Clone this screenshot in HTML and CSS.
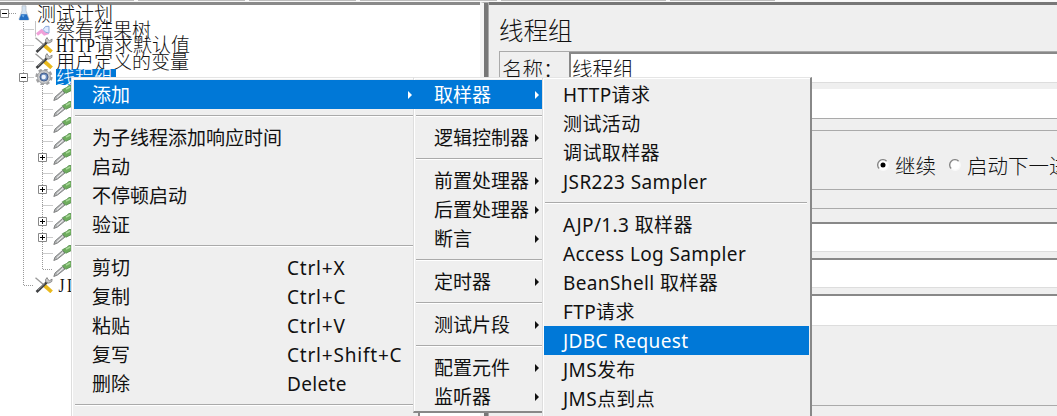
FILE: index.html
```html
<!DOCTYPE html>
<html lang="zh-CN">
<head>
<meta charset="utf-8">
<title>线程组</title>
<link rel="stylesheet" href="styles.css">
</head>
<body>
<svg class="defs" width="0" height="0">
  <defs>
    <symbol id="tools" viewBox="0 0 18 16">
      <path d="M.5.8 9 8" stroke="#999" stroke-width="1.3"/><path d="M9.5 8.5 16.6 14.8" stroke="#e9b91d" stroke-width="3.8"/>
      <path d="M1.5 15 12.5 4.6" stroke="#3e4042" stroke-width="2.6"/><path d="M3 13 10 6.3" stroke="#aaa" stroke-width=".7"/>
      <path d="M12 .6q-2.4 2-1.2 4.5 3 2.4 6-.6l.3-2.4-2.7 1.6-1.4-1.2z" fill="#ccc" stroke="#777" stroke-width=".8"/>
    </symbol>
    <symbol id="dropper" viewBox="0 0 18 16">
      <path d="M.8 15.5 2 12 9.5 5.5 12 8 4.5 14z" fill="#b4b6b7" stroke="#6a6c6c" stroke-width=".8"/>
      <path d="M4 12.6 10 7.4" stroke="#f4f4f4" stroke-width="1"/>
      <path d="M9.4 4.7 12.8 8.3 15 7.2 18.5 5.5v-5H16L13.5 2.6z" fill="#6fae5e" stroke="#528a4a" stroke-width=".8"/>
      <path d="m13 4.2 4-2.2" stroke="#a9d899" stroke-width="1.5"/>
    </symbol>
    <symbol id="flask" viewBox="0 0 12 16">
      <path d="M4 .8h4v5l3 8.2q0 1-1 1H2q-1 0-1-1l3-8.2z" fill="#d2e2f1" stroke="#b2b9c1" stroke-width=".7"/>
      <path d="M3.2 9.2h5.6l2 5q0 .8-1 .8H2q-1 0-.8-.8z" fill="#246fc3"/><path d="M3.5 10.3h3l-1.2 2.2z" fill="#78b5ed"/>
    </symbol>
    <symbol id="chart" viewBox="0 0 18 16">
      <path d="M.5 0v15.5" stroke="#c5c5c5"/><path d="m2 13.5 4.5-3.5 3 3 4-1.5" fill="none" stroke="#f0a0d8" stroke-width="3.2"/>
      <path d="M8 8.5q2-4.5 6-3.2v6.8q-4 0-6-3.6z" fill="#dfeaff" stroke="#8daada"/>
    </symbol>
    <symbol id="gear" viewBox="0 0 18 16">
      <circle cx="9" cy="8" r="7.4" fill="none" stroke="#a0a0a2" stroke-width="2.4" stroke-dasharray="3.4 2.4"/>
      <circle cx="9" cy="8" r="6.6" fill="#c5c6c8" stroke="#98999b" stroke-width=".7"/>
      <circle cx="9" cy="8" r="4" fill="#6d8fc2" stroke="#465f8c"/><circle cx="8.7" cy="8" r="2.2" fill="#eef3fa"/>
    </symbol>
    <symbol id="radio" viewBox="0 0 12 12">
      <circle cx="6" cy="6" r="5" fill="#fff"/><path d="M2.2 9.6A5 5 0 0 1 9.6 2.2" fill="none" stroke="#888" stroke-width="1.4"/><path d="M9.8 2.6A5 5 0 0 1 2.6 9.8" fill="none" stroke="#fafafa" stroke-width="1.2"/>
    </symbol>
  </defs>
</svg>
<div class="app">
  <div class="toolbar"><i class="t1"></i><i class="t2"></i><i class="t3"></i><i class="t4"></i><i class="t5"></i><i class="t6"></i></div>
  <div class="split">
    <div class="tree">
      <svg class="lines" width="72" height="300" fill="none" stroke="#999" stroke-dasharray="1 1">
        <path d="M9 8.5H16M23.5 17V280.5H34M23.5 24.5H34M23.5 40.5H34M23.5 56.5H34M23.5 72.5H34"/>
        <path d="M42.5 81V264.5H53M42.5 88.5H53M42.5 104.5H53M42.5 120.5H53M42.5 136.5H53M42.5 152.5H53M42.5 168.5H53M42.5 184.5H53M42.5 200.5H53M42.5 216.5H53M42.5 232.5H53M42.5 248.5H53"/>
        <g fill="#fff" stroke="#888" stroke-dasharray="none"><path d="M.5 4.5h8v8h-8zM19.5 68.5h8v8h-8zM38.5 148.5h8v8h-8zM38.5 180.5h8v8h-8zM38.5 212.5h8v8h-8zM38.5 228.5h8v8h-8z"/></g>
        <path stroke="#000" stroke-dasharray="none" d="M2 8.5h5M21 72.5h5M40 152.5h5M42.5 150v5M40 184.5h5M42.5 182v5M40 216.5h5M42.5 214v5M40 232.5h5M42.5 230v5"/>
      </svg>
      <div class="node root"><svg class="flask"><use href="#flask"/></svg><span>测试计划</span></div>
      <div class="node l1"><svg><use href="#chart"/></svg><span>察看结果树</span></div>
      <div class="node l1"><svg><use href="#tools"/></svg><span><b class="latin">HTTP</b>请求默认值</span></div>
      <div class="node l1"><svg><use href="#tools"/></svg><span>用户定义的变量</span></div>
      <div class="node l1"><svg><use href="#gear"/></svg><span class="selected">线程组</span></div>
      <div class="node l2"><svg><use href="#dropper"/></svg></div><div class="node l2"><svg><use href="#dropper"/></svg></div>
      <div class="node l2"><svg><use href="#dropper"/></svg></div><div class="node l2"><svg><use href="#dropper"/></svg></div>
      <div class="node l2"><svg><use href="#dropper"/></svg></div><div class="node l2"><svg><use href="#dropper"/></svg></div>
      <div class="node l2"><svg><use href="#dropper"/></svg></div><div class="node l2"><svg><use href="#dropper"/></svg></div>
      <div class="node l2"><svg><use href="#dropper"/></svg></div><div class="node l2"><svg><use href="#dropper"/></svg></div>
      <div class="node l2"><svg><use href="#dropper"/></svg></div><div class="node l2"><svg><use href="#dropper"/></svg></div>
      <div class="node l1"><svg><use href="#tools"/></svg><span><b class="latin jd">JD</b></span></div>
    </div>
    <div class="divider"></div>
    <div class="panel">
      <h1>线程组</h1>
      <div class="name"><label>名称：</label><div class="input">线程组</div></div>
      <div class="comment"></div>
      <div class="action">
        <svg class="radio"><use href="#radio"/><circle cx="6" cy="6" r="2.5"/></svg><span class="continue">继续</span>
        <svg class="radio"><use href="#radio"/></svg><span>启动下一进程</span>
      </div>
      <div class="props"><div class="field"></div><div class="field"></div><div class="field last"></div></div>
    </div>
  </div>
</div>
<div class="menu main">
  <div class="item active sub">添加</div><hr>
  <div class="item">为子线程添加响应时间</div><div class="item">启动</div><div class="item">不停顿启动</div><div class="item">验证</div><hr>
  <div class="item">剪切<kbd>Ctrl+X</kbd></div><div class="item">复制<kbd>Ctrl+C</kbd></div><div class="item">粘贴<kbd>Ctrl+V</kbd></div><div class="item">复写<kbd>Ctrl+Shift+C</kbd></div><div class="item">删除<kbd class="word">Delete</kbd></div><hr>
</div>
<div class="menu add">
  <div class="item active sub">取样器</div><hr><div class="item sub">逻辑控制器</div><hr>
  <div class="item sub">前置处理器</div><div class="item sub">后置处理器</div><div class="item sub">断言</div><hr>
  <div class="item sub">定时器</div><hr><div class="item sub">测试片段</div><hr>
  <div class="item sub">配置元件</div><div class="item sub">监听器</div>
</div>
<div class="menu sampler">
  <div class="item">HTTP请求</div><div class="item">测试活动</div><div class="item">调试取样器</div><div class="item">JSR223 Sampler</div><hr>
  <div class="item">AJP/1.3 取样器</div><div class="item">Access Log Sampler</div><div class="item">BeanShell 取样器</div><div class="item">FTP请求</div><div class="item active">JDBC Request</div><div class="item">JMS发布</div><div class="item">JMS点到点</div>
</div>
</body>
</html>
```
FILE: styles.css
```css
* { box-sizing: border-box; }
body { margin: 0; width: 1057px; height: 416px; overflow: hidden; position: relative; background: #efefef; color: #111; font-family: "Noto Sans", "Noto Sans CJK SC", sans-serif; }
.defs { position: absolute; }
.app { height: 416px; overflow: hidden; }
.toolbar { height: 2px; display: flex; gap: 4px; background: #f8f8f8; }
.toolbar i { background: #bdbdbd; height: 1px; }
.t1 { width: 134px; } .t2 { width: 107px; } .t3 { width: 107px; } .t4 { width: 137px; } .t5 { width: 165px; } .t6 { width: 105px; }
.split { display: flex; height: 414px; }
.tree { width: 480px; background: #fff; border-top: 3px solid #8a8a8a; position: relative; font: 300 19px/16px "Noto Sans CJK SC", sans-serif; color: #111; }
.lines { position: absolute; left: 0; top: 0; }
.node { height: 16px; display: flex; align-items: center; white-space: nowrap; position: relative; }
.node svg { width: 18px; height: 16px; flex: none; }
.node svg.flask { width: 12px; margin-right: 7px; }
.root { padding-left: 18px; }
.l1 { padding-left: 35px; gap: 3px; }
.l2 { padding-left: 53px; }
.selected { background: #0078d7; color: #fff; height: 16px; padding-right: 3px; }
.latin { display: inline-block; width: 39px; font: 19px/16px "Liberation Serif", serif; transform: scaleX(.82); transform-origin: left; }
.jd { padding-left: 3px; letter-spacing: 3px; }
.divider { width: 9px; border-left: 4px solid #f5f5f5; border-right: 1px solid #aaa; background: #777; border-top: 1px solid #aaa; }
.panel { width: 568px; border-top: 3px solid #777; padding-left: 10px; font-family: "Noto Sans CJK SC", sans-serif; font-weight: 300; color: #111; }
h1 { margin: 0; height: 46px; font-size: 24.5px; font-weight: 300; line-height: 50px; }
.name { height: 32px; display: flex; border: 1px solid #aaa; border-right: 0; border-bottom: 0; font-size: 20.5px; line-height: 32px; }
.name label { width: 69px; padding-left: 2px; }
.input { flex: 1; border: 2px solid #888; border-right: 0; border-bottom: 1px solid #ddd; background: #fff; padding-left: 1px; line-height: 29px; }
.comment { height: 30px; margin-top: 6px; background: #fff; border-bottom: 1px solid #aaa; }
.action { height: 60px; margin-top: 11px; border-top: 1px solid #aaa; border-bottom: 1px solid #aaa; display: flex; align-items: center; padding: 10px 0 0 378px; font-size: 20.5px; white-space: nowrap; }
.radio { width: 12px; height: 12px; flex: none; margin-right: 6px; }
.continue { margin-right: 13px; }
.props { height: 198px; margin-top: 18px; border-top: 1px solid #aaa; border-bottom: 1px solid #aaa; padding-top: 13px; }
.field { height: 30px; margin-bottom: 6px; background: #fff; border-top: 2px solid #888; border-bottom: 1px solid #ddd; }
.field.last { height: 32px; }
.menu { position: absolute; top: 77px; background: #efefef; border-top: 1px solid #e5e5e5; border-left: 1px solid #dedede; padding-top: 2px; font-size: 19px; box-shadow: inset 1px 1px #fff; }
.main { left: 71px; width: 349px; height: 340px; padding: 2px 3px 0 2px; border-right: 2px solid #888; }
.add { left: 413px; width: 131px; height: 336px; padding-left: 1px; border-bottom: 2px solid #888; }
.add .active { margin-left: -2px; padding-left: 21px; }
.sampler { left: 542px; width: 270px; height: 340px; padding: 2px 1px 0; border-right: 2px solid #888; }
.item { height: 29px; line-height: 29px; padding: 2px 0 0 19px; display: flex; align-items: center; position: relative; white-space: nowrap; }
.main .item { padding-left: 18px; }
.sampler .item { letter-spacing: .38px; }
.active { background: #0078d7; color: #fff; }
.sub::after { content: ""; margin: -2px 5px 0 auto; border: 4px solid transparent; border-left-color: currentColor; border-right: 0; }
.main .sub::after { margin-right: 3px; }
kbd { font: inherit; position: absolute; left: 213px; letter-spacing: .8px; }
kbd.word { letter-spacing: .35px; }
hr { margin: 6px 2px 6px 1px; border: 0; border-top: 1px solid #aaa; border-bottom: 1px solid #fff; height: 2px; }
```
